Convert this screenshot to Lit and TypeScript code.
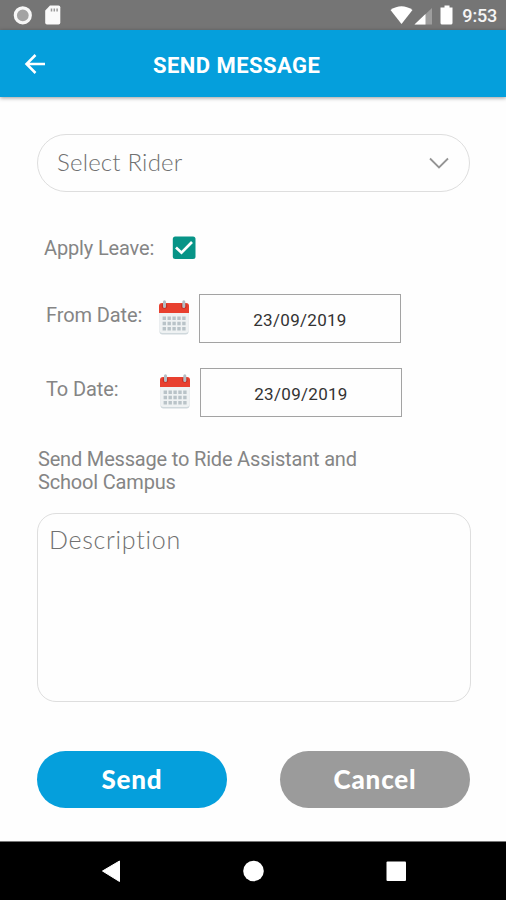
import { LitElement, html, css } from "lit";
import { customElement, property } from "lit/decorators.js";

@customElement("calendar-icon")
class CalendarIcon extends LitElement {
  static styles = css`
    :host { display: block; width: 32px; height: 36px; }
    svg { display: block; }
  `;
  render() {
    const cols = [0, 1, 2, 3, 4];
    const rows = [0, 1, 2];
    const x = (c: number) => 4.6 + c * 4.9;
    const y = (r: number) => 16.6 + r * 5.2;
    const d = rows
      .flatMap((r) => cols.map((c) => `M${x(c)} ${y(r)}h3.4v3.4h-3.4z`))
      .join("");
    return html`<svg width="32" height="36" viewBox="0 0 32 36">
      <path d="M1.5 12h29v19.5a3 3 0 0 1-3 3h-23a3 3 0 0 1-3-3z" fill="#cfd8dc" />
      <path d="M1.5 12h29v18a3 3 0 0 1-3 3h-23a3 3 0 0 1-3-3z" fill="#eff2f3" />
      <path d="M1 13V6a3 3 0 0 1 3-3h24a3 3 0 0 1 3 3v7z" fill="#e8402f" />
      <circle cx="6.5" cy="6" r="2.8" fill="#c52f24" />
      <circle cx="25.8" cy="6" r="2.8" fill="#c52f24" />
      <path d="M6.5 1.8v4.6M25.8 1.8v4.6" stroke="#b4bec4" stroke-width="3" stroke-linecap="round" />
      <path d=${d} fill="#b9c3c8" />
    </svg>`;
  }
}

@customElement("date-row")
class DateRow extends LitElement {
  @property() label = "";
  @property() value = "";
  static styles = css`
    :host { display: flex; height: 49px; align-items: stretch; font-family: Roboto, sans-serif; }
    .label { width: var(--label-width, 112px); color: #858585; font-size: 20px; line-height: 24px; letter-spacing: -0.1px; padding-top: 9px; white-space: nowrap; }
    calendar-icon { margin-top: 6px; margin-right: 9px; }
    .field {
      box-sizing: border-box; width: 202px; border: 1px solid #a3a3a3; color: #333;
      font-size: 17px; letter-spacing: 0.3px; display: flex; align-items: center; justify-content: center;
      padding-top: 2px;
    }
  `;
  render() {
    return html`<span class="label">${this.label}</span>
      <calendar-icon></calendar-icon>
      <div class="field">${this.value}</div>`;
  }
}

@customElement("app-root")
class AppRoot extends LitElement {
  static styles = css`
    :host {
      display: flex; flex-direction: column; width: 506px; height: 900px; overflow: hidden;
      background: #fefefe; font-family: Roboto, sans-serif; color: #858585;
    }
    svg { display: block; flex: none; }
    .status { height: 30px; background: #757575; display: flex; align-items: center; flex: none; }
    .clock { color: #f5f5f5; font-size: 18px; font-weight: 500; letter-spacing: -0.2px; line-height: 22px; margin: 0 9px; padding-top: 2px; }
    .grow { flex: 1; }
    .status .left { margin-left: 12px; }
    .bar {
      height: 67px; background: #059fdc; box-shadow: 0 1px 4px rgba(0, 0, 0, 0.4);
      display: flex; align-items: center; flex: none;
    }
    .back { margin-left: 24px; }
    .title { margin: 4px 0 0 107px; color: #fff; font-size: 22px; font-weight: 700; line-height: 28px; letter-spacing: 0.45px; white-space: nowrap; }
    .body { flex: 1; display: flex; flex-direction: column; padding: 37px 35px 0 37px; }
    .select {
      box-sizing: border-box; width: 433px; height: 58px; border: 1.5px solid #dedede; border-radius: 29px;
      display: flex; align-items: center; justify-content: space-between; padding: 0 19px;
    }
    .hint {
      font-family: Lato, sans-serif; font-weight: 300; font-size: 24px; line-height: 30px; color: #707070;
      white-space: nowrap; font-variant-ligatures: none;
    }
    .rider { letter-spacing: 0.2px; margin-top: -2px; }
    .desc { font-size: 25px; letter-spacing: 0.7px; }
    .leave { display: flex; align-items: center; margin: 43px 0 0 7px; height: 26px; font-size: 20px; letter-spacing: -0.15px; }
    .leave span { width: 128px; white-space: nowrap; }
    .from { margin: 33px 0 0 9px; }
    .to { margin: 25px 0 0 9px; --label-width: 113px; }
    .from, .to { width: 360px; }
    .note { margin: 31px 0 0 1px; width: 360px; font-size: 20px; line-height: 23px; letter-spacing: -0.18px; }
    .area {
      box-sizing: border-box; width: 434px; height: 189px; border: 1.5px solid #dedede; border-radius: 19px;
      margin-top: 19px; padding: 10px 11px;
    }
    .actions { display: flex; gap: 53px; margin-top: 49px; }
    .btn {
      width: 190px; height: 57px; border: 0; border-radius: 29px; padding: 0 0 2px; color: #fff; background: #059fdc;
      font: 900 26px/30px Lato, sans-serif; letter-spacing: 0.8px;
    }
    .muted { background: #9b9b9b; }
    .nav { height: 58px; flex: none; background: #000; border-top: 1px solid #777; display: flex; align-items: center; }
  `;
  render() {
    return html`
      <div class="status">
        <svg class="left" width="52" height="22" viewBox="0 0 52 22">
          <circle cx="10.8" cy="11.3" r="7.5" fill="#a3a3a3" stroke="#f7f7f7" stroke-width="3.2" />
          <path d="M38 1.5h8.5q1.8 0 1.8 1.8v15.5q0 1.8-1.8 1.8h-11.5q-1.8 0-1.8-1.8V6.5z" fill="#fafafa" />
          <path d="M39.5 4.5v3M42.3 4.5v3M45.1 4.5v3" stroke="#999" stroke-width="1.5" />
        </svg>
        <div class="grow"></div>
        <svg width="65" height="22" viewBox="0 0 65 22">
          <path d="M2.5 6q11-7.5 22 0L13.5 20z" fill="#fff" />
          <path d="M44 4v16.5H26.5z" fill="#9d9d9d" />
          <path d="M37.5 10.1v10.4h-11z" fill="#fff" />
          <path d="M56.500 1.500h5v2h3v15.500q0 1.600-1.600 1.600h-8.800q-1.600 0-1.600-1.600V3.500h4z" fill="#fff" />
        </svg>
        <span class="clock">9:53</span>
      </div>
      <div class="bar">
        <svg class="back" width="22" height="22" viewBox="0 0 22 22" fill="none" stroke="#fff" stroke-width="2.5">
          <path d="M21 11H3M11.5 2L2.5 11l9 9" />
        </svg>
        <div class="title">SEND MESSAGE</div>
      </div>
      <div class="body">
        <div class="select">
          <span class="hint rider">Select Rider</span>
          <svg width="22" height="14" viewBox="0 0 22 14" fill="none" stroke="#949494" stroke-width="1.8">
            <path d="M2 2.5L11 11.5l9-9" />
          </svg>
        </div>
        <div class="leave">
          <span>Apply Leave:</span>
          <svg width="24" height="24" viewBox="0 0 24 24">
            <rect x="0.8" y="0.5" width="22.7" height="22.5" rx="2.5" fill="#079487" />
            <path d="M4 11.5l5.5 5.2L20 6" fill="none" stroke="#fff" stroke-width="2.7" />
          </svg>
        </div>
        <date-row class="from" label="From Date:" value="23/09/2019"></date-row>
        <date-row class="to" label="To Date:" value="23/09/2019"></date-row>
        <div class="note">Send Message to Ride Assistant and<br />School Campus</div>
        <div class="area"><span class="hint desc">Description</span></div>
        <div class="actions">
          <button class="btn">Send</button>
          <button class="btn muted">Cancel</button>
        </div>
      </div>
      <div class="nav">
        <svg width="506" height="58" viewBox="0 0 506 58" fill="#fff">
          <path d="M102.5 29L119.5 19v20.5z" stroke="#fff" stroke-linejoin="round" />
          <circle cx="253.5" cy="29" r="10.3" />
          <rect x="386.5" y="19.5" width="19.5" height="19.5" rx="1" />
        </svg>
      </div>
    `;
  }
}
